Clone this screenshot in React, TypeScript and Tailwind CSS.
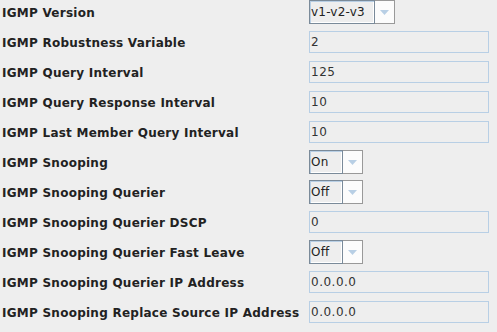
const rows: { label: string; kind: "combo" | "field"; value: string; wide?: boolean }[] = [
  { label: "IGMP Version", kind: "combo", value: "v1-v2-v3", wide: true },
  { label: "IGMP Robustness Variable", kind: "field", value: "2" },
  { label: "IGMP Query Interval", kind: "field", value: "125" },
  { label: "IGMP Query Response Interval", kind: "field", value: "10" },
  { label: "IGMP Last Member Query Interval", kind: "field", value: "10" },
  { label: "IGMP Snooping", kind: "combo", value: "On" },
  { label: "IGMP Snooping Querier", kind: "combo", value: "Off" },
  { label: "IGMP Snooping Querier DSCP", kind: "field", value: "0" },
  { label: "IGMP Snooping Querier Fast Leave", kind: "combo", value: "Off" },
  { label: "IGMP Snooping Querier IP Address", kind: "field", value: "0.0.0.0" },
  { label: "IGMP Snooping Replace Source IP Address", kind: "field", value: "0.0.0.0" },
];

const Combo = ({ value, wide }: { value: string; wide?: boolean }) => (
  <div className="flex h-[24px]">
    <div
      className={`${wide ? "w-[66px]" : "w-[34px]"} h-full border border-[#7a8a99] bg-[#eeeeee] shadow-[inset_1px_1px_0_#b8cfe5,inset_-1px_-1px_0_#ffffff] pl-[1px] flex items-center text-[12px] tracking-[0.2px] text-[#222]`}
    >
      {value}
    </div>
    <div className="w-[20px] h-full border border-l-0 border-[#999999] bg-[#fcfcfc] flex items-center justify-center">
      <svg width="9" height="5" viewBox="0 0 9 5">
        <path d="M0 0h9L4.5 5z" fill="#b8cfe5" />
      </svg>
    </div>
  </div>
);

const Field = ({ value }: { value: string }) => (
  <div className="w-[180px] h-[22px] border border-[#b8cfe5] bg-[#eeeeee] pl-[1px] flex items-center text-[12px] tracking-[0.5px] text-[#333]">
    {value}
  </div>
);

export default function App() {
  return (
    <div
      className="w-[497px] h-[332px] bg-[#eeeeee] flex flex-col gap-[6px] overflow-hidden"
      style={{ fontFamily: '"DejaVu Sans", sans-serif' }}
    >
      {rows.map((r) => (
        <div key={r.label} className="flex items-center h-[24px] shrink-0">
          <div className="w-[309px] pl-[2px] pt-[1px] text-[12px] font-bold tracking-[0.25px] text-[#222] whitespace-nowrap">
            {r.label}
          </div>
          {r.kind === "combo" ? <Combo value={r.value} wide={r.wide} /> : <Field value={r.value} />}
        </div>
      ))}
    </div>
  );
}
